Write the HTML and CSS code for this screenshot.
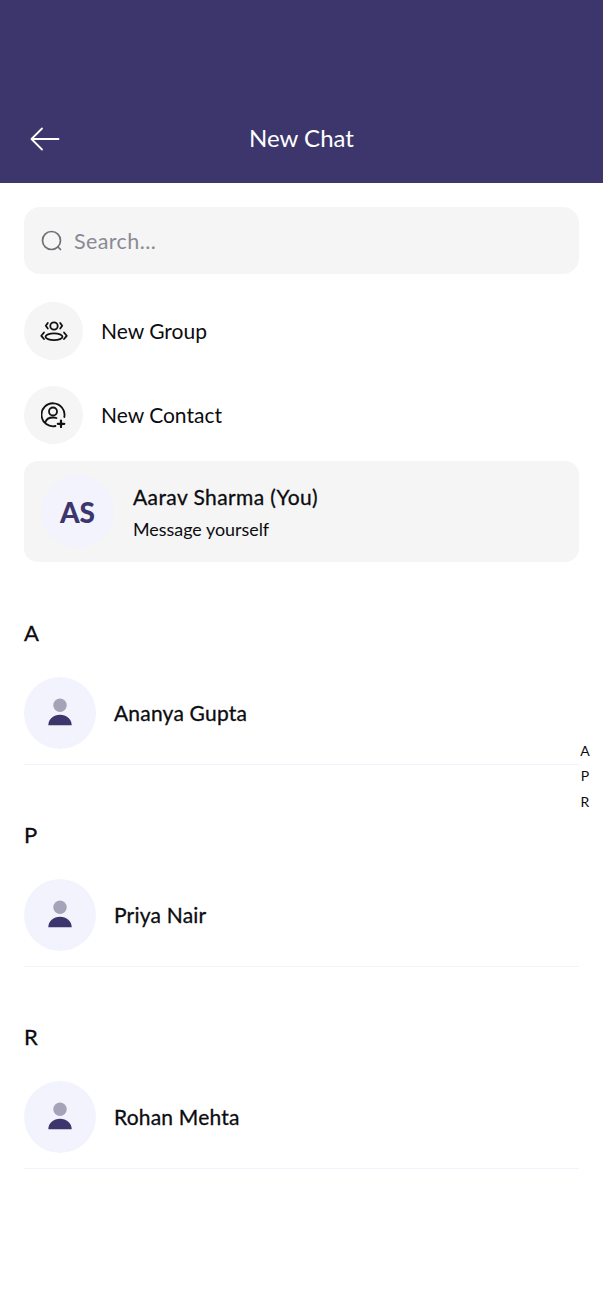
FILE: index.html
```html
<!DOCTYPE html>
<html lang="en">
<head>
<meta charset="utf-8">
<title>New Chat</title>
<link rel="stylesheet" href="styles.css">
</head>
<body>
<div class="page">
  <header class="header">
    <svg class="back" viewBox="0 0 30 24" width="30" height="24" fill="none" stroke="#fff" stroke-width="1.800" stroke-linecap="round" stroke-linejoin="round"><path d="M28.500 12H1.500M12 1.500 1.500 12 12 22.500"/></svg>
    <h1 class="title">New Chat</h1>
  </header>
  <main class="content">
    <div class="search">
      <svg viewBox="0 0 22 22" width="22" height="22" fill="none" stroke="#6f6f78" stroke-width="1.700" stroke-linecap="round"><circle cx="10.500" cy="10.500" r="9"/><path d="m17 17 2.500 2.500"/></svg>
      <span class="placeholder">Search...</span>
    </div>
    <div class="action action-first">
      <span class="action-icon">
        <svg viewBox="0 0 28 22" width="28" height="22" fill="none" stroke="#111" stroke-width="1.800" stroke-linecap="round" stroke-linejoin="round"><circle cx="14" cy="6" r="3.700"/><ellipse cx="14" cy="16.700" rx="8.500" ry="3.400"/><path d="M7.800 3 5.800 5.800l2 2.700M20.200 3l2 2.800-2 2.700M4 12.500 1.300 15.800 4 19M24 12.500l2.700 3.300L24 19"/></svg>
      </span>
      <span class="action-label">New Group</span>
    </div>
    <div class="action">
      <span class="action-icon">
        <svg viewBox="1 0 26 26" width="26" height="26" fill="none" stroke="#111" stroke-width="1.800" stroke-linecap="round"><path d="M15.500 24A11.500 11.500 0 1 1 24.300 15"/><circle cx="13" cy="9.500" r="4"/><path d="M5.500 20c1-3.500 4-4.500 7.500-4.500 1.500 0 2.500.2 3.500.5"/><path d="M21 18.500v6.500M17.800 21.800h6.500" stroke-width="2.200"/></svg>
      </span>
      <span class="action-label">New Contact</span>
    </div>
    <div class="self">
      <span class="avatar self-avatar">AS</span>
      <div class="self-text">
        <div class="self-name">Aarav Sharma (You)</div>
        <div class="self-sub">Message yourself</div>
      </div>
    </div>
    <section class="group">
      <h2 class="letter">A</h2>
      <div class="contact">
        <span class="avatar"><svg viewBox="0 0 26 32" width="26" height="32"><circle cx="13" cy="8.300" r="6.700" fill="#a5a3b8"/><path d="M1.300 28.300C1.300 22 6.500 17.700 13 17.700S24.700 22 24.700 28.300z" fill="#3c366d"/></svg></span>
        <span class="contact-name">Ananya Gupta</span>
      </div>
    </section>
    <section class="group">
      <h2 class="letter">P</h2>
      <div class="contact">
        <span class="avatar"><svg viewBox="0 0 26 32" width="26" height="32"><circle cx="13" cy="8.300" r="6.700" fill="#a5a3b8"/><path d="M1.300 28.300C1.300 22 6.500 17.700 13 17.700S24.700 22 24.700 28.300z" fill="#3c366d"/></svg></span>
        <span class="contact-name">Priya Nair</span>
      </div>
    </section>
    <section class="group">
      <h2 class="letter">R</h2>
      <div class="contact">
        <span class="avatar"><svg viewBox="0 0 26 32" width="26" height="32"><circle cx="13" cy="8.300" r="6.700" fill="#a5a3b8"/><path d="M1.300 28.300C1.300 22 6.500 17.700 13 17.700S24.700 22 24.700 28.300z" fill="#3c366d"/></svg></span>
        <span class="contact-name">Rohan Mehta</span>
      </div>
    </section>
  </main>
  <nav class="index"><span>A</span><span>P</span><span>R</span></nav>
</div>
</body>
</html>
```
FILE: styles.css
```css
* { box-sizing: border-box; }
html, body { margin: 0; padding: 0; background: #fff; }
body { font-family: "Lato", "Liberation Sans", sans-serif; color: #0c0c10; }
.page { position: relative; width: 603px; height: 1311px; overflow: hidden; }
.header { position: relative; height: 183px; background: #3c366d; display: flex; align-items: flex-end; justify-content: center; padding-bottom: 29px; }
.back { position: absolute; left: 30px; top: 127px; }
.title { margin: 0; color: #fff; font-size: 24px; font-weight: 400; line-height: 32px; }
.content { padding: 24px 24px 0; }
.search { height: 67px; background: #f5f5f5; border-radius: 16px; display: flex; align-items: center; gap: 11px; padding-left: 17px; }
.placeholder { color: #8a8a94; font-size: 21.500px; letter-spacing: .4px; }
.action { display: flex; align-items: center; gap: 18px; margin-top: 26px; height: 58px; }
.action-first { margin-top: 28px; }
.action-icon { width: 59px; height: 58px; border-radius: 50%; background: #f5f5f5; display: flex; align-items: center; justify-content: center; flex: none; }
.action-label { font-size: 21px; margin-bottom: 2px; }
.self { margin-top: 17px; height: 101px; background: #f5f5f5; border-radius: 14px; display: flex; align-items: center; gap: 19px; padding-left: 17px; }
.avatar { width: 72px; height: 72px; border-radius: 50%; background: #f3f3fe; display: flex; align-items: center; justify-content: center; flex: none; }
.self-avatar { width: 73px; height: 73px; color: #3c366d; font-size: 28px; font-weight: 900; }
.self-name { font-size: 21px; line-height: 26px; letter-spacing: .4px; -webkit-text-stroke: .3px currentColor; }
.self-sub { font-size: 17.900px; line-height: 22px; margin-top: 8px; }
.group { height: 202px; padding-top: 59px; }
.letter { margin: 0; font-size: 22px; font-weight: 400; line-height: 24px; -webkit-text-stroke: .3px currentColor; }
.contact { margin-top: 32px; height: 88px; padding-bottom: 15px; border-bottom: 1.500px solid #f3f3fe; display: flex; align-items: center; gap: 18px; }
.contact-name { font-size: 21px; letter-spacing: .2px; margin-bottom: 2px; -webkit-text-stroke: .3px currentColor; }
.index { position: absolute; left: 578px; top: 738px; width: 14px; display: flex; flex-direction: column; align-items: center; font-size: 14px; line-height: 25.400px; }
```
